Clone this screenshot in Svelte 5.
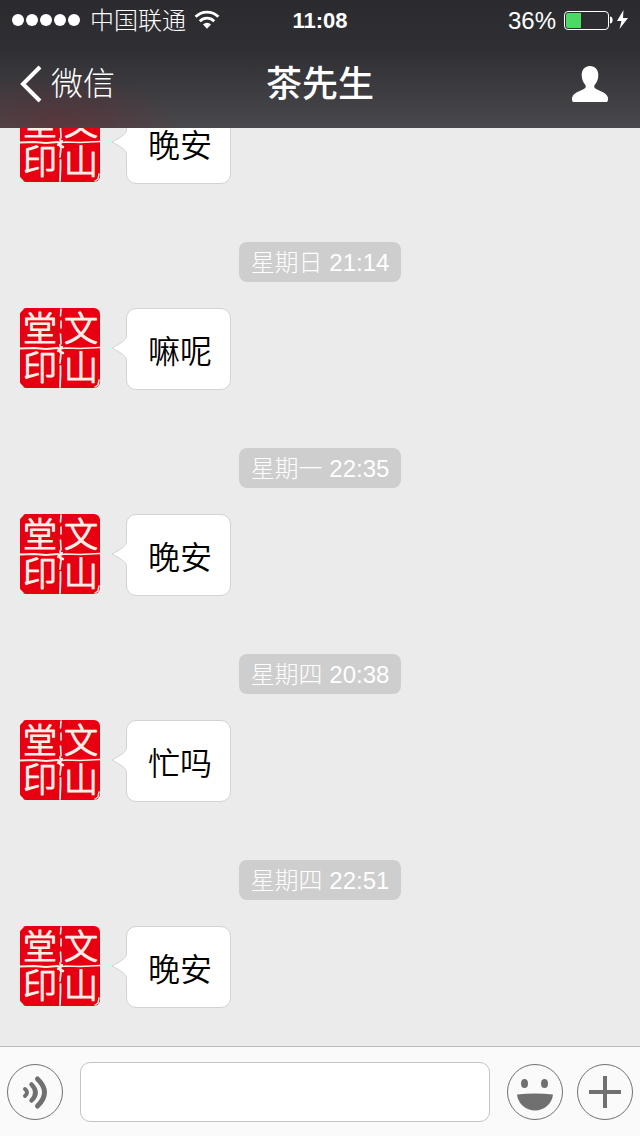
<script>
  const contact = '茶先生';
  const signal = [1, 2, 3, 4, 5];
  const battery = 36;

  const messages = [
    { id: 1, time: '', text: '晚安' },
    { id: 2, time: '星期日 21:14', text: '嘛呢' },
    { id: 3, time: '星期一 22:35', text: '晚安' },
    { id: 4, time: '星期四 20:38', text: '忙吗' },
    { id: 5, time: '星期四 22:51', text: '晚安' }
  ];

  let draft = $state('');
</script>

{#snippet seal()}
  <svg class="avatar" viewBox="0 0 80 80" role="img" aria-label={contact}>
    <rect width="80" height="80" rx="6" fill="#e60012" />
    <g class="seal-text">
      <text x="20" y="33">堂</text>
      <text x="61" y="33">文</text>
      <text x="20" y="72">印</text>
      <text x="61" y="72">山</text>
    </g>
    <g fill="none" stroke="#fbeee6" stroke-linecap="round">
      <path d="M0 40.500l14-.5 12 1 12-1" stroke-width="2" />
      <path d="M38 41l8-1 14 .5 20-1" stroke-width="1.600" />
      <path d="M41 1l-.5 7m.5 5v7m-.5 6l.5 10" stroke-width="1.600" />
      <path d="M40 37l1 8-1 10m.5 3v8l-.5 13" stroke-width="1.800" />
      <path d="M38 43l4-4m-2 5l3 1" stroke-width="2.400" />
      <path d="M0 4l3-3M0 76l3 3M79 72l-1 5-3 2" stroke-width="1.400" />
    </g>
  </svg>
{/snippet}

<div class="app">
  <header>
    <div class="status">
      <div class="status-left">
        <span class="signal">
          {#each signal as bar (bar)}
            <i></i>
          {/each}
        </span>
        <span class="carrier">中国联通</span>
        <svg width="26" height="20" viewBox="0 0 26 20" aria-hidden="true">
          <g fill="none" stroke="#fff" stroke-width="2.8">
            <path d="M1.6 6.8a16 16 0 0 1 22.8 0" />
            <path d="M5.8 11.2a10.2 10.2 0 0 1 14.4 0" />
          </g>
          <path d="M9 14.4a5.7 5.7 0 0 1 8 0L13 18.8z" fill="#fff" />
        </svg>
      </div>
      <strong class="clock">11:08</strong>
      <div class="status-right">
        <span>{battery}%</span>
        <span class="battery"><span class="level" style={`width: ${battery}%`}></span></span>
        <svg width="18" height="20" viewBox="0 0 18 20" aria-hidden="true">
          <path d="M0 6.500c3.500 0 3.500 7 0 7z" fill="#fff" />
          <path d="M13.500 0L7 11h4.500L9.500 19 18 8h-5z" fill="#fff" />
        </svg>
      </div>
    </div>
    <nav>
      <a class="back" href="#chats">
        <svg width="24" height="38" viewBox="0 0 24 38" aria-hidden="true">
          <path d="M21 2L4 19l17 17" fill="none" stroke="#fff" stroke-width="4" />
        </svg>
        微信
      </a>
      <h1>{contact}</h1>
      <button class="profile" type="button" aria-label="聊天详情">
        <svg width="36" height="36" viewBox="0 0 36 36">
          <path
            d="M18 0c5 0 8.300 3.600 8.300 9 0 4.200-1.300 7.400-3.500 9.800-.8.900-.8 2.700.3 3.500 3.400 2.600 11 4 12.600 8.700.6 2 .4 5-1.200 5h-33c-1.600 0-1.800-3-1.200-5 1.600-4.700 9.200-6.100 12.600-8.700 1.100-.8 1.100-2.600.3-3.500C11 16.400 9.700 13.200 9.700 9 9.700 3.600 13 0 18 0z"
            fill="#fff"
          />
        </svg>
      </button>
    </nav>
  </header>

  <main>
    <ul>
      {#each messages as message (message.id)}
        <li>
          {#if message.time}
            <time>{message.time}</time>
          {/if}
          <div class="message">
            {@render seal()}
            <p class="bubble">
              <svg class="tail" width="16" height="26" viewBox="0 0 16 26" aria-hidden="true">
                <path d="M16 0C15 5 12 7 1 13c11 6 14 8 15 13" fill="#fff" stroke="#d3d3d3" />
              </svg>
              {message.text}
            </p>
          </div>
        </li>
      {/each}
    </ul>
  </main>

  <footer>
    <button class="round" type="button" aria-label="语音">
      <svg width="54" height="54" viewBox="0 0 54 54">
        <g fill="none" stroke="#707070" stroke-linecap="round">
          <path d="M17 24q4 3.500 0 7" stroke-width="4" />
          <path d="M23.500 19.500q8 8 0 16" stroke-width="4.500" />
          <path d="M29.500 14q14 13.500 0 27" stroke-width="5" />
        </g>
      </svg>
    </button>
    <input type="text" aria-label="消息" bind:value={draft} />
    <button class="round" type="button" aria-label="表情">
      <svg width="54" height="54" viewBox="0 0 54 54">
        <g fill="#707070">
          <ellipse cx="16.500" cy="18.500" rx="3.500" ry="4.500" />
          <ellipse cx="36.500" cy="18.500" rx="3.500" ry="4.500" />
          <path d="M9 29.500q18-2 36 0C44 39 36 45.500 27 45.500S10 39 9 29.500z" />
        </g>
      </svg>
    </button>
    <button class="round more" type="button" aria-label="更多">
      <svg width="54" height="54" viewBox="0 0 54 54">
        <path d="M27 11v32M11 27h32" fill="none" stroke="#707070" stroke-width="4" />
      </svg>
    </button>
  </footer>
</div>

<style>
  :global(body) {
    margin: 0;
  }

  .app {
    display: flex;
    flex-direction: column;
    height: 100vh;
    background: #ebebeb;
    color: #000;
    font-family: 'Liberation Sans', 'Noto Sans CJK SC', sans-serif;
    font-weight: 300;
  }

  svg {
    display: block;
    flex: none;
  }

  header {
    flex: none;
    color: #fff;
    background:
      radial-gradient(ellipse 120px 56px at 60px 100%, rgba(130, 20, 30, 0.3), transparent),
      linear-gradient(#2b2a2f, #302f34 40%, #49484c);
  }

  .status {
    display: grid;
    grid-template-columns: 1fr auto 1fr;
    align-items: center;
    height: 40px;
    padding: 0 12px;
    font-size: 24px;
    line-height: 38px;
  }

  .status-left,
  .status-right {
    display: flex;
    align-items: center;
  }

  .status span,
  .clock {
    padding-top: 2px;
  }

  .status-right {
    justify-content: flex-end;
  }

  .status .signal {
    display: flex;
    gap: 2px;
    margin-right: 10px;
    padding: 0;
  }

  .signal i {
    width: 12px;
    height: 12px;
    border-radius: 50%;
    background: #fff;
  }

  .carrier {
    margin-right: 8px;
  }

  .clock {
    font-size: 22px;
    font-weight: 700;
  }

  .status .battery {
    box-sizing: border-box;
    width: 45px;
    height: 19px;
    margin: 0 1px 0 8px;
    padding: 1px;
    border: 1px solid #fff;
    border-radius: 4px;
  }

  .status .level {
    display: block;
    box-sizing: border-box;
    height: 100%;
    padding: 0;
    border-radius: 2px 0 0 2px;
    background: #4cd964;
  }

  nav {
    display: grid;
    grid-template-columns: 1fr auto 1fr;
    align-items: center;
    height: 88px;
    padding: 0 19px;
  }

  .back {
    display: flex;
    align-items: center;
    gap: 8px;
    color: #fff;
    font-size: 32px;
    line-height: 44px;
    text-decoration: none;
  }

  h1 {
    margin: 0;
    padding-top: 2px;
    font-size: 36px;
    font-weight: 500;
    line-height: 44px;
  }

  button {
    padding: 0;
    border: 0;
    background: none;
    cursor: pointer;
  }

  .profile {
    justify-self: end;
    padding: 0 13px;
  }

  main {
    display: flex;
    flex: 1;
    flex-direction: column-reverse;
    min-height: 0;
    overflow-y: auto;
    scrollbar-width: none;
  }

  ul {
    display: flex;
    flex-direction: column;
    gap: 58px;
    margin: 0;
    padding: 0 20px 38px;
    list-style: none;
  }

  li {
    display: flex;
    flex-direction: column;
    gap: 26px;
  }

  time {
    align-self: center;
    padding: 2px 12px 0;
    border-radius: 8px;
    background: #cecece;
    color: #fff;
    font-size: 24px;
    line-height: 38px;
  }

  .message {
    display: flex;
    align-items: flex-start;
    gap: 26px;
  }

  .avatar {
    width: 80px;
    height: 80px;
  }

  .seal-text {
    fill: #fbeee6;
    stroke: #fbeee6;
    stroke-width: 1.2;
    stroke-linejoin: round;
    font-size: 34px;
    font-weight: 300;
    text-anchor: middle;
  }

  .bubble {
    position: relative;
    margin: 0;
    padding: 21px 18px 15px 21px;
    border: 1px solid #d3d3d3;
    border-radius: 10px;
    background: #fff;
    font-size: 32px;
    font-weight: 350;
    line-height: 44px;
  }

  .tail {
    position: absolute;
    top: 26px;
    left: -16px;
  }

  footer {
    display: flex;
    flex: none;
    align-items: center;
    height: 89px;
    padding: 0 7px;
    border-top: 1px solid #b9b9b9;
    background: #fafafa;
  }

  .round {
    flex: none;
    border: 1px solid #707070;
    border-radius: 50%;
  }

  .more {
    margin-left: 14px;
  }

  input {
    box-sizing: border-box;
    flex: 1;
    min-width: 0;
    height: 60px;
    margin: 0 17px;
    padding: 0 12px;
    border: 1px solid #c4c4c4;
    border-radius: 10px;
    background: #fff;
    font: inherit;
    font-size: 32px;
  }
</style>
